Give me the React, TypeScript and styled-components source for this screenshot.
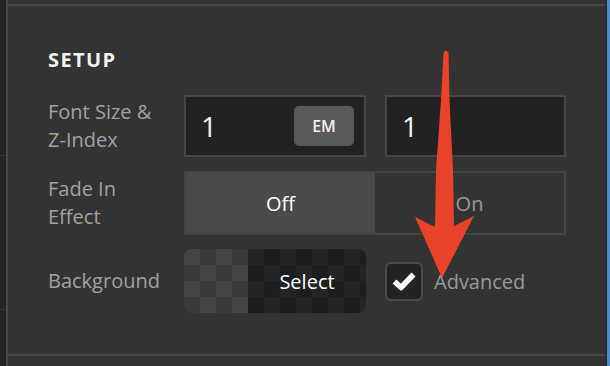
import styled, { createGlobalStyle } from "styled-components";

const GlobalStyle = createGlobalStyle`
  html, body {
    margin: 0;
    padding: 0;
    background: #333333;
  }
  * {
    box-sizing: border-box;
  }
`

const Page = styled.div`
  position: relative;
  display: flex;
  width: 610px;
  height: 366px;
  overflow: hidden;
  font-family: "Open Sans", "Liberation Sans", sans-serif;
`

const SideStrip = styled.div`
  width: 6px;
  display: flex;
  flex-direction: column;
  background: #262626;
`

const StripSegment = styled.div<{ $h: number }>`
  height: ${p => p.$h}px;
  border-bottom: 1px solid #3a3a3a;
`

const Panel = styled.div`
  flex: 1;
  background: #333333;
  border-left: 2px solid #4a4a4a;
  border-right: 2px solid #2b2b2b;
  padding-top: 4px;
`

const BlueEdge = styled.div`
  width: 3px;
  background: #4a8dcc;
`

const Frame = styled.div`
  height: 352px;
  border-top: 2px solid #484848;
  border-bottom: 2px solid #484848;
  padding: 40px 0 0 40px;
`

const Title = styled.h2`
  margin: 0 0 22px;
  font-size: 20px;
  line-height: 27px;
  font-weight: 700;
  letter-spacing: 1.4px;
  color: #f2f2f2;
`

const Form = styled.div`
  display: grid;
  grid-template-columns: 117px 182px 181px;
  grid-template-rows: 62px 64px 64px;
  column-gap: 19px;
  row-gap: 14px;
`

const Label = styled.div`
  display: flex;
  align-items: center;
  font-size: 20px;
  line-height: 28px;
  color: #a2a2a2;
  white-space: nowrap;
`

const InputBox = styled.div`
  display: flex;
  align-items: center;
  justify-content: space-between;
  padding: 0 10px 0 15px;
  background: #222222;
  border: 2px solid #464646;
  color: #f4f4f4;
  font-size: 28px;
`

const UnitButton = styled.div`
  width: 60px;
  height: 40px;
  display: flex;
  align-items: center;
  justify-content: center;
  border-radius: 5px;
  background: #5a5a5a;
  color: #f0f0f0;
  font-size: 16px;
  font-weight: 600;
`

const Toggle = styled.div`
  grid-column: 2 / span 2;
  display: grid;
  grid-template-columns: 1fr 1fr;
  border: 2px solid #444444;
  background: #323232;
`

const ToggleOption = styled.div<{ $active?: boolean }>`
  display: flex;
  align-items: center;
  justify-content: center;
  font-size: 20px;
  background: ${p => (p.$active ? "#4a4a4a" : "#333333")};
  color: ${p => (p.$active ? "#ffffff" : "#9a9a9a")};
`

const SelectButton = styled.div`
  display: flex;
  border-radius: 8px;
  overflow: hidden;
`

const Swatch = styled.div`
  width: 64px;
  background: repeating-conic-gradient(#3b3b3b 0 25%, #444444 0 50%) 0 0 / 32px 32px;
`

const SelectLabel = styled.div`
  flex: 1;
  display: flex;
  align-items: center;
  justify-content: center;
  font-size: 20px;
  color: #ffffff;
  background: repeating-conic-gradient(#1d1d1d 0 25%, #242424 0 50%) 0 0 / 32px 32px;
`

const CheckRow = styled.div`
  display: flex;
  align-items: center;
  gap: 11px;
  font-size: 20px;
  color: #9a9a9a;
`

const CheckBox = styled.div`
  width: 38px;
  height: 39px;
  display: flex;
  align-items: center;
  justify-content: center;
  border-radius: 6px;
  border: 2px solid #4a4a4a;
  background: #232323;
`

const ArrowLayer = styled.svg`
  position: absolute;
  left: 0;
  top: 0;
  pointer-events: none;
`

export default function App() {
  return (
    <>
      <GlobalStyle />
      <Page>
        <SideStrip>
          <StripSegment $h={156} />
          <StripSegment $h={154} />
        </SideStrip>
        <Panel>
          <Frame>
            <Title>SETUP</Title>
            <Form>
              <Label>Font Size &amp;<br />Z-Index</Label>
              <InputBox>
                <span>1</span>
                <UnitButton>EM</UnitButton>
              </InputBox>
              <InputBox>
                <span>1</span>
              </InputBox>

              <Label>Fade In<br />Effect</Label>
              <Toggle>
                <ToggleOption $active>Off</ToggleOption>
                <ToggleOption>On</ToggleOption>
              </Toggle>

              <Label>Background</Label>
              <SelectButton>
                <Swatch />
                <SelectLabel>Select</SelectLabel>
              </SelectButton>
              <CheckRow>
                <CheckBox>
                  <svg width="24" height="22" viewBox="0 0 24 22">
                    <path d="M2.5 11.5 L9 17.5 L21.5 4.5" fill="none" stroke="#ffffff" strokeWidth="5.5" strokeLinejoin="round" />
                  </svg>
                </CheckBox>
                Advanced
              </CheckRow>
            </Form>
          </Frame>
        </Panel>
        <BlueEdge />
        <ArrowLayer width="610" height="366" viewBox="0 0 610 366">
          <path
            d="M443.5 53 Q446 48 448.5 53 L449.5 100 L453 170 L454 226 L474 216 L442 278 L415 217 L435 227 L436 170 L441 100 Z"
            fill="#e9432a"
          />
        </ArrowLayer>
      </Page>
    </>
  )
}
